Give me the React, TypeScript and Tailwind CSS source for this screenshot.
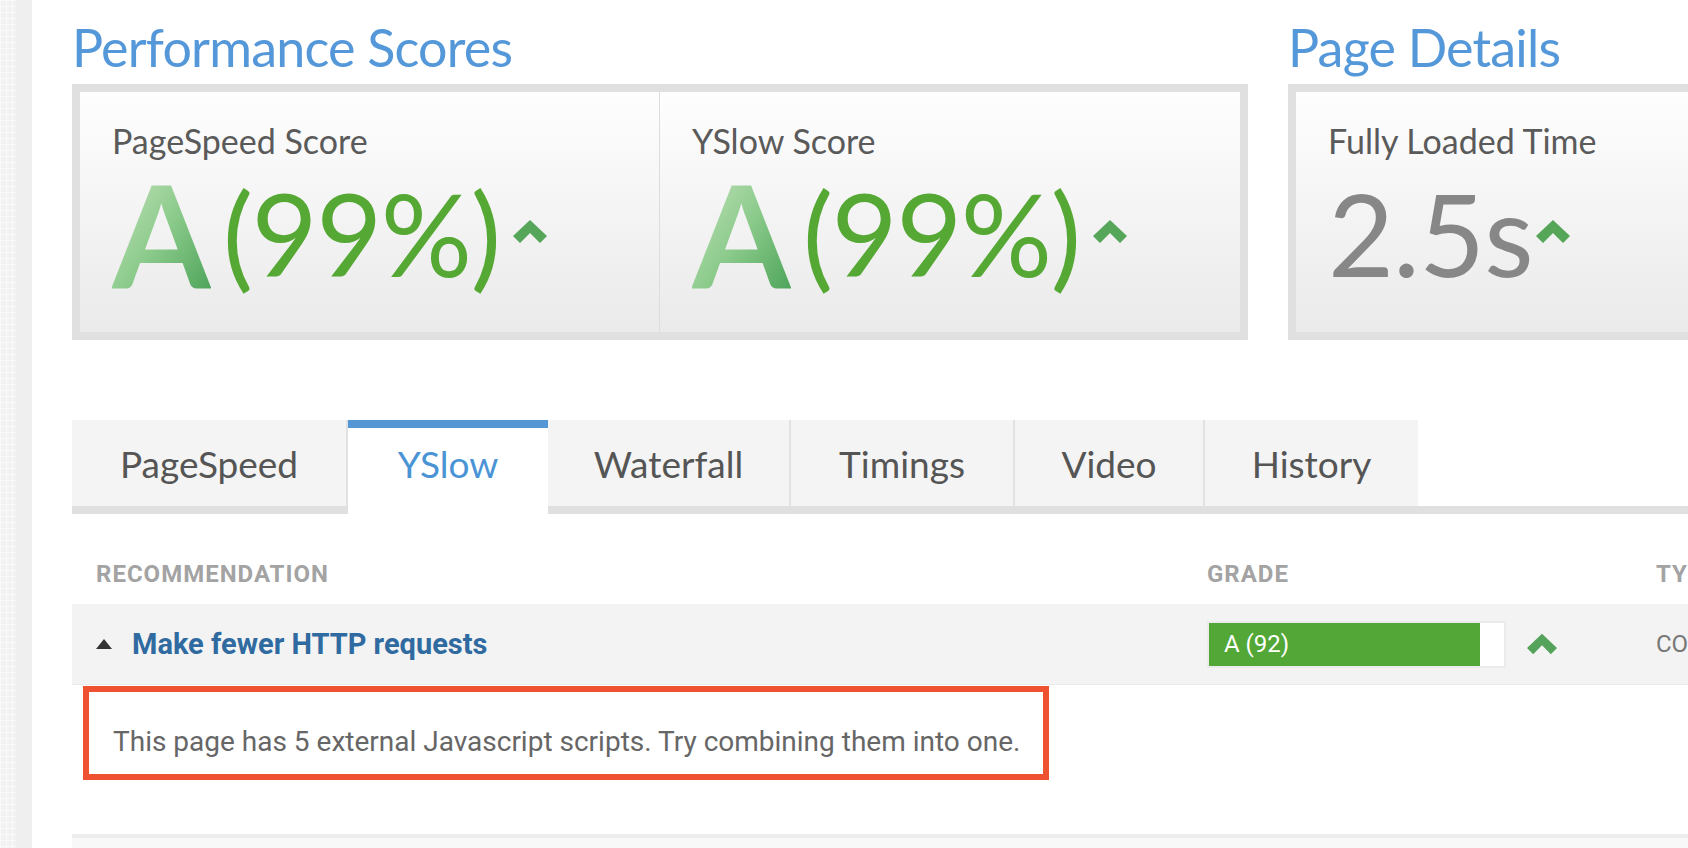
import React from "react";

const tabs = [
  { name: "PageSpeed", w: "w-[276px]" },
  { name: "YSlow", w: "w-[200px]", active: true },
  { name: "Waterfall", w: "w-[243px]" },
  { name: "Timings", w: "w-[224px]" },
  { name: "Video", w: "w-[190px]" },
  { name: "History", w: "w-[213px]", last: true },
];

const Caret = ({ className }: { className?: string }) => (
  <svg viewBox="0 0 34 23" className={className}>
    <polygon points="0,16 17,0 34,16 27,23 17,13 7,23" fill="#56a65a" />
  </svg>
);

const ScoreCell = ({ label, divider }: { label: string; divider?: boolean }) => (
  <div className={`pl-8 pt-8 ${divider ? "border-r border-[#dddddd]" : ""}`}>
    <div className="text-[34px] leading-none text-[#5a5a5a]">{label}</div>
    <div className="mt-[4px] flex items-start">
      <span className="bg-linear-to-br from-[#cbe5c2] via-[#8ccb8c] to-[#45a055] bg-clip-text text-[142px] font-bold leading-none text-transparent">
        A
      </span>
      <span className="ml-[12px] mt-[14px] text-[114px] leading-none tracking-[-1.5px] text-[#55a834]">(99%)</span>
      <Caret className="ml-[13px] mt-[58px] h-[23px] w-[34px]" />
    </div>
  </div>
);

export default function App() {
  return (
    <div className="flex h-screen w-full overflow-hidden bg-white font-['Lato',sans-serif]">
      {/* left rail */}
      <div className="w-4 shrink-0 bg-[#f2f2f2] bg-[linear-gradient(#fafafa_1px,transparent_1px),linear-gradient(90deg,#fafafa_1px,transparent_1px)] bg-size-[6px_6px]" />
      <div className="w-4 shrink-0 bg-[#efefef]" />

      <div className="ml-10 min-w-0 flex-1">
        {/* scores */}
        <div className="flex gap-10 pt-[21px]">
          <section className="w-[1176px] shrink-0">
            <h2 className="text-[52px] leading-none tracking-[-0.8px] text-[#5598d9]">Performance Scores</h2>
            <div className="mt-[11px] border-8 border-[#e0e0e0]">
              <div className="grid h-[240px] grid-cols-2 bg-linear-to-b from-[#fefefe] to-[#eaeaea]">
                <ScoreCell label="PageSpeed Score" divider />
                <ScoreCell label="YSlow Score" />
              </div>
            </div>
          </section>

          <section className="w-[600px] shrink-0">
            <h2 className="text-[52px] leading-none tracking-[-0.8px] text-[#5598d9]">Page Details</h2>
            <div className="mt-[11px] border-8 border-[#e0e0e0]">
              <div className="h-[240px] bg-linear-to-b from-[#fefefe] to-[#eaeaea] pl-8 pt-8">
                <div className="text-[34px] leading-none text-[#5a5a5a]">Fully Loaded Time</div>
                <div className="mt-[18px] flex items-start">
                  <span className="text-[114px] leading-none tracking-[-1px] text-[#878787]">2.5s</span>
                  <Caret className="ml-[3px] mt-[44px] h-[23px] w-[34px]" />
                </div>
              </div>
            </div>
          </section>
        </div>

        {/* tabs */}
        <div className="mt-[80px] flex items-start border-b-8 border-[#e0e0e0]">
          {tabs.map((t) =>
            t.active ? (
              <div
                key={t.name}
                className={`${t.w} -mb-[8px] flex h-[94px] shrink-0 items-center justify-center border-t-8 border-[#5596d5] bg-white pb-4 text-[37px] leading-none text-[#4a94d6]`}
              >
                {t.name}
              </div>
            ) : (
              <div
                key={t.name}
                className={`${t.w} flex h-[86px] shrink-0 items-center justify-center bg-[#f4f4f4] text-[37px] leading-none text-[#555555] ${t.last ? "" : "border-r-2 border-[#e2e2e2]"}`}
              >
                {t.name}
              </div>
            )
          )}
        </div>

        {/* table */}
        <div className="font-['Roboto',sans-serif]">
          <div className="grid grid-cols-[1111px_449px_1fr] pl-6 pt-12 pb-[18px] text-[24px] font-bold leading-none text-[#a3a3a3]">
            <span className="tracking-[1px]">RECOMMENDATION</span>
            <span className="tracking-[1px]">GRADE</span>
            <span className="tracking-[1px] whitespace-nowrap">TYPE</span>
          </div>

          <div className="grid h-[81px] grid-cols-[1111px_449px_1fr] items-center border-b border-[#ebebeb] bg-[#f3f3f3] pl-6">
            <div className="flex items-center gap-5">
              <svg viewBox="0 0 16 10" className="h-[10px] w-4">
                <polygon points="0,10 8,0 16,10" fill="#333333" />
              </svg>
              <a href="#" className="text-[29px] font-bold leading-none text-[#2f6aa0]">
                Make fewer HTTP requests
              </a>
            </div>
            <div className="flex items-center">
              <div className="h-[47px] w-[299px] border-2 border-[#ebebeb] bg-white">
                <div className="flex h-full w-[92%] items-center bg-[#52a736] pl-[15px] text-[24px] leading-none text-white">
                  A (92)
                </div>
              </div>
              <svg viewBox="0 0 34 23" className="ml-[21px] h-[22px] w-[30px]">
                <polygon points="0,16 17,0 34,16 27,23 17,13 7,23" fill="#55a35a" />
              </svg>
            </div>
            <span className="whitespace-nowrap text-[24px] leading-none text-[#777777]">CONTENT</span>
          </div>

          <div className="ml-[11px] mt-px w-[966px] border-[6px] border-[#ee5230] bg-white pl-6 pt-9 pb-[18px] text-[28px] leading-none text-[#666666]">
            This page has 5 external Javascript scripts. Try combining them into one.
          </div>

          <div className="mt-[54px] h-[60px] border-t-4 border-[#ededed] bg-[#f8f8f8]" />
        </div>
      </div>
    </div>
  );
}
